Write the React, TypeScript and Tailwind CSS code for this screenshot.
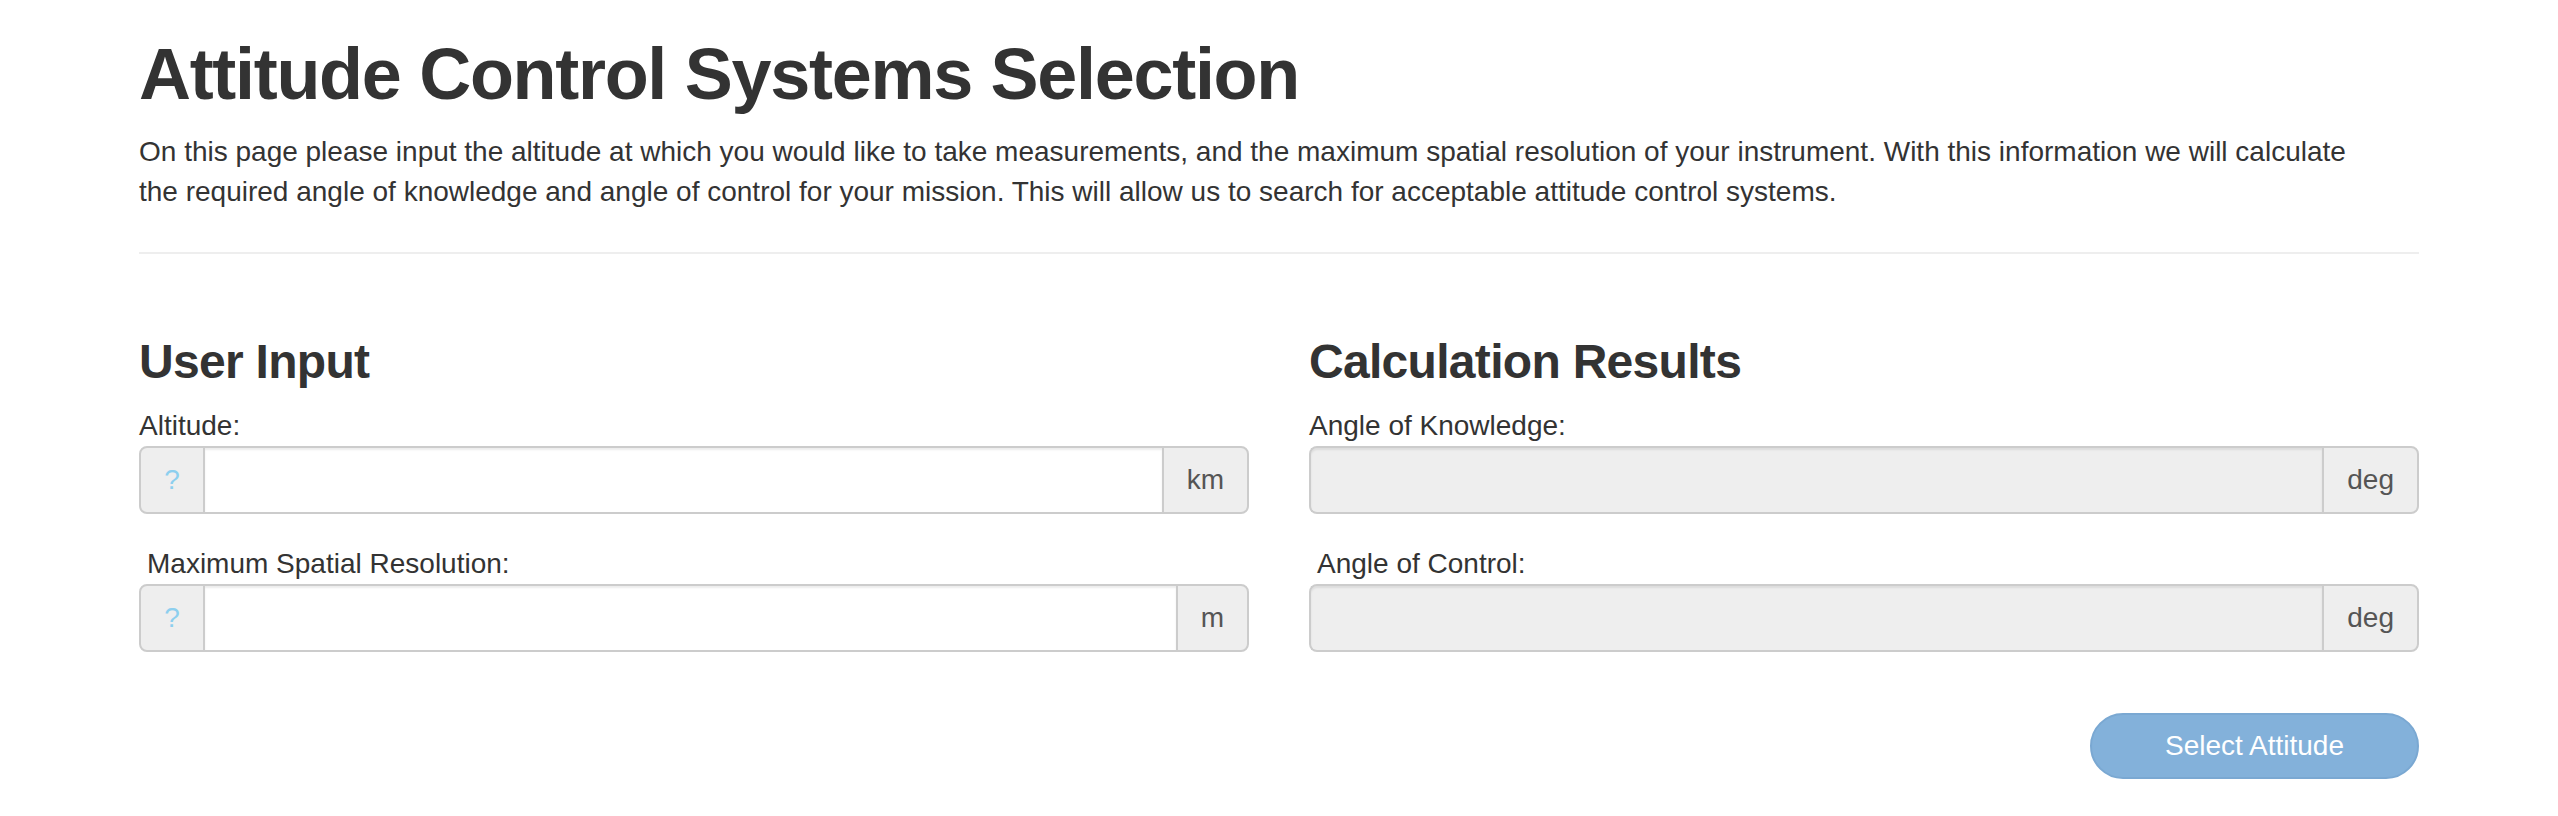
import React from "react";

type FieldProps = {
  label: string;
  unit: string;
  readOnly?: boolean;
  indent?: boolean;
  last?: boolean;
};

function Field({ label, unit, readOnly, indent, last }: FieldProps) {
  return (
    <div className={last ? "" : "mb-[30px]"}>
      <label className={`block text-[28px] leading-[40px] text-[#333] ${indent ? "pl-[8px]" : ""}`}>
        {label}
      </label>
      <div className="flex h-[68px] w-full">
        {!readOnly && (
          <span className="flex w-[66px] items-center justify-center rounded-l-[8px] border-2 border-[#ccc] bg-[#eee] text-[28px] text-[#8dcfee]">
            ?
          </span>
        )}
        <input
          type="text"
          disabled={readOnly}
          className={
            readOnly
              ? "min-w-0 flex-1 rounded-l-[8px] border-2 border-r-0 border-[#ccc] bg-[#eee] px-[24px] text-[28px] text-[#555] shadow-[inset_0_2px_2px_rgba(0,0,0,0.075)] outline-none"
              : "min-w-0 flex-1 border-y-2 border-[#ccc] bg-white px-[24px] text-[28px] text-[#555] shadow-[inset_0_2px_2px_rgba(0,0,0,0.075)] outline-none"
          }
        />
        <span className="flex items-center rounded-r-[8px] border-2 border-[#ccc] bg-[#eee] px-[23px] text-[28px] text-[#555]">
          {unit}
        </span>
      </div>
    </div>
  );
}

export default function App() {
  return (
    <main className="min-h-screen bg-white font-['Liberation_Sans',Arial,sans-serif] text-[#333] antialiased">
      <div className="mx-auto w-[2340px] px-[30px]">
        <h1 className="mt-[35px] mb-[18px] text-[72px] leading-[79px] font-bold tracking-[-1.3px]">
          Attitude Control Systems Selection
        </h1>
        <p className="max-w-[2240px] text-[28px] leading-[40px]">
          On this page please input the altitude at which you would like to take measurements, and the maximum
          spatial resolution of your instrument. With this information we will calculate the required angle of
          knowledge and angle of control for your mission. This will allow us to search for acceptable attitude
          control systems.
        </p>
        <hr className="mt-[40px] mb-[40px] border-0 border-t-2 border-[#eee]" />

        <div className="grid grid-cols-2 gap-[60px]">
          <section>
            <h3 className="mt-[41px] mb-[18px] text-[48px] leading-[53px] font-bold tracking-[-0.7px]">User Input</h3>
            <Field label="Altitude:" unit="km" />
            <Field label="Maximum Spatial Resolution:" unit="m" indent last />
          </section>

          <section>
            <h3 className="mt-[41px] mb-[18px] text-[48px] leading-[53px] font-bold tracking-[-0.7px]">
              Calculation Results
            </h3>
            <Field label="Angle of Knowledge:" unit="deg" readOnly />
            <Field label="Angle of Control:" unit="deg" readOnly indent last />
            <div className="mt-[61px] flex justify-end">
              <button
                disabled
                className="h-[66px] rounded-full border-2 border-[#7aa8d2] bg-[#83b1da] px-[73px] text-[28px] text-white"
              >
                Select Attitude
              </button>
            </div>
          </section>
        </div>
      </div>
    </main>
  );
}
